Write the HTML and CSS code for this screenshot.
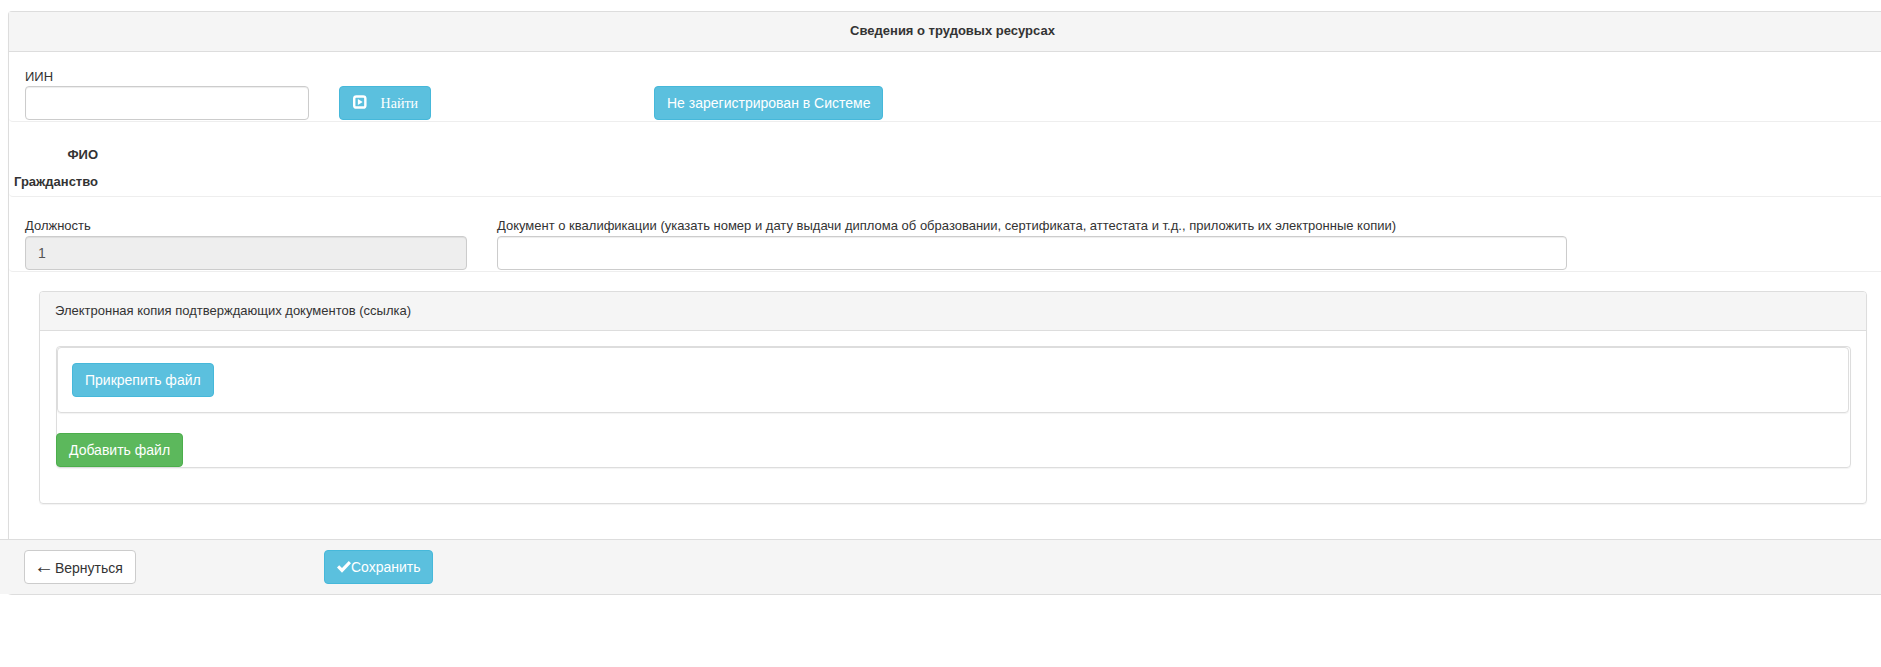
FILE: index.html
```html
<!DOCTYPE html>
<html lang="ru">
<head>
<meta charset="utf-8">
<title>Сведения о трудовых ресурсах</title>
<link rel="stylesheet" href="styles.css">
</head>
<body>
<div class="panel">
  <div class="panel-heading"><strong>Сведения о трудовых ресурсах</strong></div>
  <div class="row row-iin">
    <div class="field field-iin">
      <label class="label label-iin">ИИН</label>
      <input class="control" type="text">
    </div>
    <button class="btn btn-info btn-find" type="button">
      <svg class="icon-play" viewBox="0 0 14 14" aria-hidden="true"><path fill="#fff" fill-rule="evenodd" d="M3.5 0h7A3.5 3.5 0 0 1 14 3.500v7a3.500 3.500 0 0 1-3.500 3.500h-7A3.500 3.500 0 0 1 0 10.500v-7A3.500 3.500 0 0 1 3.500 0zM3 2.500a.5.5 0 0 0-.5.5v8a.5.5 0 0 0 .5.5h8a.5.5 0 0 0 .5-.5V3a.5.5 0 0 0-.5-.5zM5 4l5 3-5 3z"/></svg>
      <span class="find-text">Найти</span>
    </button>
    <button class="btn btn-info btn-unreg" type="button">Не зарегистрирован в Системе</button>
  </div>
  <div class="row row-info">
    <div class="info-line"><b class="info-label">ФИО</b></div>
    <div class="info-line"><b class="info-label">Гражданство</b></div>
  </div>
  <div class="row row-job">
    <div class="field field-job">
      <label class="label">Должность</label>
      <input class="control" type="text" value="1" disabled>
    </div>
    <div class="field field-doc">
      <label class="label">Документ о квалификации (указать номер и дату выдачи диплома об образовании, сертификата, аттестата и т.д., приложить их электронные копии)</label>
      <input class="control" type="text">
    </div>
  </div>
  <div class="subpanel">
    <div class="subpanel-heading">Электронная копия подтверждающих документов (ссылка)</div>
    <div class="subpanel-body">
      <div class="well">
        <div class="well-item">
          <button class="btn btn-info" type="button">Прикрепить файл</button>
        </div>
        <button class="btn btn-success btn-add" type="button">Добавить файл</button>
      </div>
    </div>
  </div>
  <div class="panel-footer">
    <button class="btn btn-default btn-back" type="button"><span class="arrow">←</span> Вернуться</button>
    <button class="btn btn-info btn-save" type="button">
      <svg class="icon-ok" viewBox="0 0 14 12" aria-hidden="true"><path fill="#fff" d="M0 6.400 2.200 4.200 5 7 11.800 0 14 2.200 5 11.800z"/></svg>Сохранить
    </button>
  </div>
</div>
</body>
</html>
```
FILE: styles.css
```css
* { box-sizing: border-box; }
html, body { margin: 0; background: #fff; }
body {
  padding: 11px 0 0 8px;
  font-family: "Liberation Sans", Arial, sans-serif;
  font-size: 14px;
  line-height: 20px;
  color: #333;
}
.panel {
  border: 1px solid #ddd;
  border-right: none;
  border-radius: 4px 0 0 4px;
  box-shadow: 0 1px 1px rgba(0, 0, 0, .05);
}
.panel-heading {
  height: 40px;
  padding: 9px 0 0 15px;
  text-align: center;
  font-size: 13px;
  background: #f5f5f5;
  border-bottom: 1px solid #ddd;
}
.row {
  display: flex;
  border-bottom: 1px solid #eee;
  border-radius: 0 0 0 4px;
}
.row-iin { height: 70px; padding: 15px 0 1px 16px; align-items: flex-end; }
.row-info { height: 75px; padding: 23px 0 0; flex-direction: column; gap: 7px; }
.row-job { height: 75px; padding: 19px 0 0 16px; }
.label { display: block; font-size: 13px; height: 20px; font-weight: 400; }
.label-iin { height: 19px; }
.field-iin { width: 284px; }
.field-job { width: 442px; }
.field-doc { width: 1070px; margin-left: 30px; }
.control {
  display: block;
  width: 100%;
  height: 34px;
  padding: 6px 12px;
  font: inherit;
  color: #555;
  background: #fff;
  border: 1px solid #ccc;
  border-radius: 4px;
  box-shadow: inset 0 1px 1px rgba(0, 0, 0, .075);
}
.control:disabled { background: #eee; opacity: 1; }
.info-line { height: 20px; width: 89px; text-align: right; font-size: 13px; }
.btn {
  display: inline-block;
  height: 34px;
  padding: 6px 12px;
  font: inherit;
  white-space: nowrap;
  border: 1px solid transparent;
  border-radius: 4px;
}
.btn-info { color: #fff; background: #5bc0de; border-color: #46b8da; }
.btn-success { color: #fff; background: #5cb85c; border-color: #4cae4c; }
.btn-default { color: #333; background: #fff; border-color: #ccc; }
.btn-find {
  display: inline-flex;
  align-items: center;
  width: 92px;
  margin-left: 30px;
  padding-left: 13px;
}
.icon-play { width: 14px; height: 14px; margin-top: -3px; }
.find-text { margin: 2px 0 0 14px; font-family: "Liberation Serif", "Times New Roman", serif; }
.btn-unreg { margin-left: 223px; }
.subpanel {
  margin: 19px 14px 35px 30px;
  border: 1px solid #ddd;
  border-radius: 4px;
  box-shadow: 0 1px 1px rgba(0, 0, 0, .05);
}
.subpanel-heading {
  height: 39px;
  padding: 9px 15px;
  font-size: 13px;
  background: #f5f5f5;
  border-bottom: 1px solid #ddd;
  border-radius: 3px 3px 0 0;
}
.subpanel-body { padding: 15px 15px 35px 16px; }
.well {
  height: 122px;
  border: 1px solid #ddd;
  border-radius: 4px;
  box-shadow: 0 1px 1px rgba(0, 0, 0, .05);
}
.well-item {
  height: 66px;
  margin: 0 1px 0 0;
  padding: 15px 0 0 14px;
  border: 1px solid #ddd;
  border-radius: 4px;
  box-shadow: 0 1px 1px rgba(0, 0, 0, .05);
}
.btn-add { margin: 20px 0 0 -1px; display: block; }
.panel-footer {
  display: flex;
  align-items: flex-start;
  height: 55px;
  margin-left: -9px;
  padding: 10px 0 0 24px;
  background: #f5f5f5;
  border-top: 1px solid #ddd;
}
.btn-back { width: 112px; padding: 6px 0 6px 12px; text-align: left; }
.arrow { font-size: 20px; line-height: 18px; letter-spacing: -3px; margin-left: -3px; }
.btn-save { margin-left: 188px; width: 109px; padding: 6px 0 6px 12px; text-align: left; }
.icon-ok { width: 14px; height: 12px; vertical-align: -1px; }
```
